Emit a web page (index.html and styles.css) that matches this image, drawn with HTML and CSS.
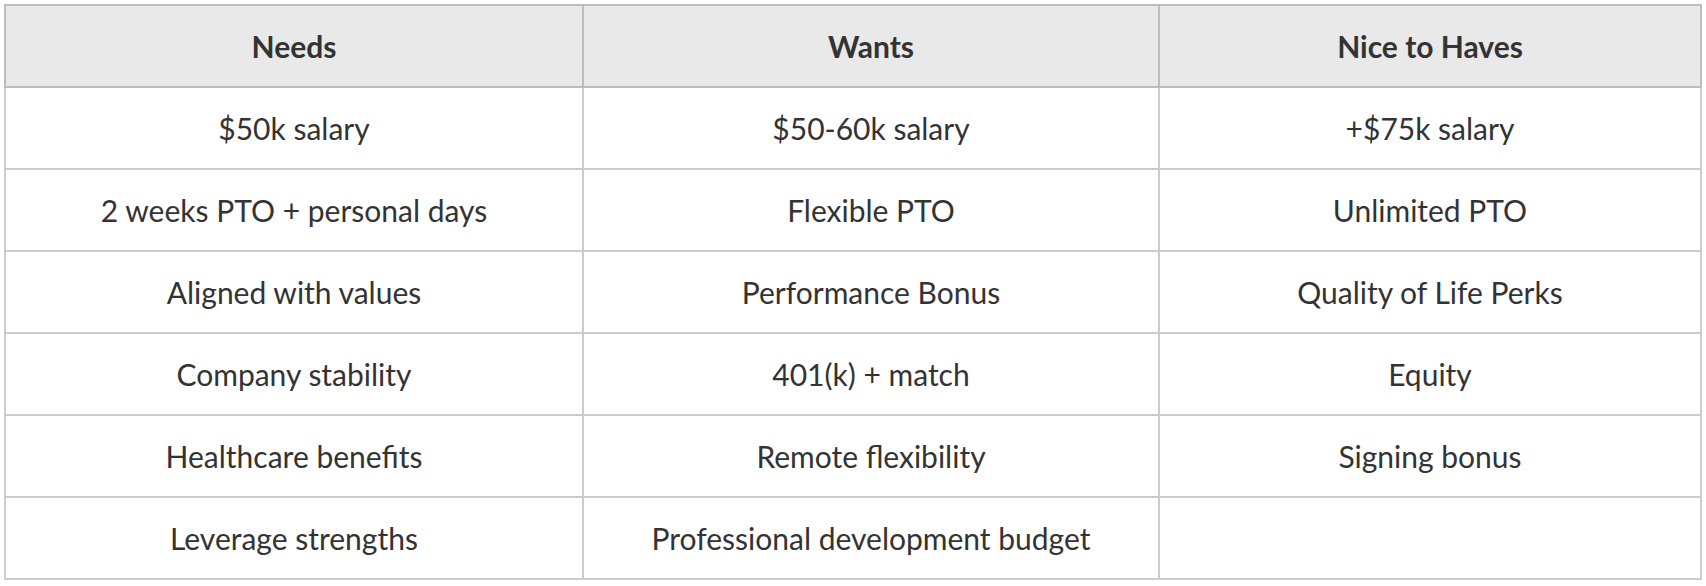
FILE: index.html
```html
<!DOCTYPE html>
<html lang="en">
<head>
<meta charset="utf-8">
<title>Needs, Wants, Nice to Haves</title>
<link rel="stylesheet" href="styles.css">
</head>
<body>
<table class="grid">
  <colgroup>
    <col class="col-needs">
    <col class="col-wants">
    <col class="col-nice">
  </colgroup>
  <thead>
    <tr>
      <th class="first">Needs</th>
      <th>Wants</th>
      <th>Nice to Haves</th>
    </tr>
  </thead>
  <tbody>
    <tr><td class="first">$50k salary</td><td>$50-60k salary</td><td>+$75k salary</td></tr>
    <tr><td class="first">2 weeks PTO + personal days</td><td>Flexible PTO</td><td>Unlimited PTO</td></tr>
    <tr><td class="first">Aligned with values</td><td>Performance Bonus</td><td>Quality of Life Perks</td></tr>
    <tr><td class="first">Company stability</td><td>401(k) + match</td><td>Equity</td></tr>
    <tr><td class="first">Healthcare benefits</td><td>Remote flexibility</td><td>Signing bonus</td></tr>
    <tr><td class="first">Leverage strengths</td><td>Professional development budget</td><td></td></tr>
  </tbody>
</table>
</body>
</html>
```
FILE: styles.css
```css
html, body {
  background: #ffffff;
}
body {
  margin: 4px;
  font-family: "Lato", "Source Sans Pro", sans-serif;
  color: #333333;
}
.grid {
  width: 1698px;
  table-layout: fixed;
  border-collapse: separate;
  border-spacing: 0;
}
.col-needs { width: 580px; }
.col-wants { width: 576px; }
.col-nice { width: 542px; }
.grid th,
.grid td {
  box-sizing: border-box;
  padding: 0;
  text-align: center;
  vertical-align: middle;
  font-size: 30px;
  line-height: 36px;
  border-right: 2px solid #cccccc;
  border-bottom: 2px solid #cccccc;
}
.grid td {
  height: 82px;
  font-weight: 400;
}
.grid th {
  height: 84px;
  font-weight: 700;
  background: #e9e9e9;
  border-top: 2px solid #bcbcbc;
  border-right-color: #bcbcbc;
  border-bottom-color: #bcbcbc;
}
.grid .first {
  border-left: 2px solid #cccccc;
}
.grid th.first {
  border-left-color: #bcbcbc;
}
```
